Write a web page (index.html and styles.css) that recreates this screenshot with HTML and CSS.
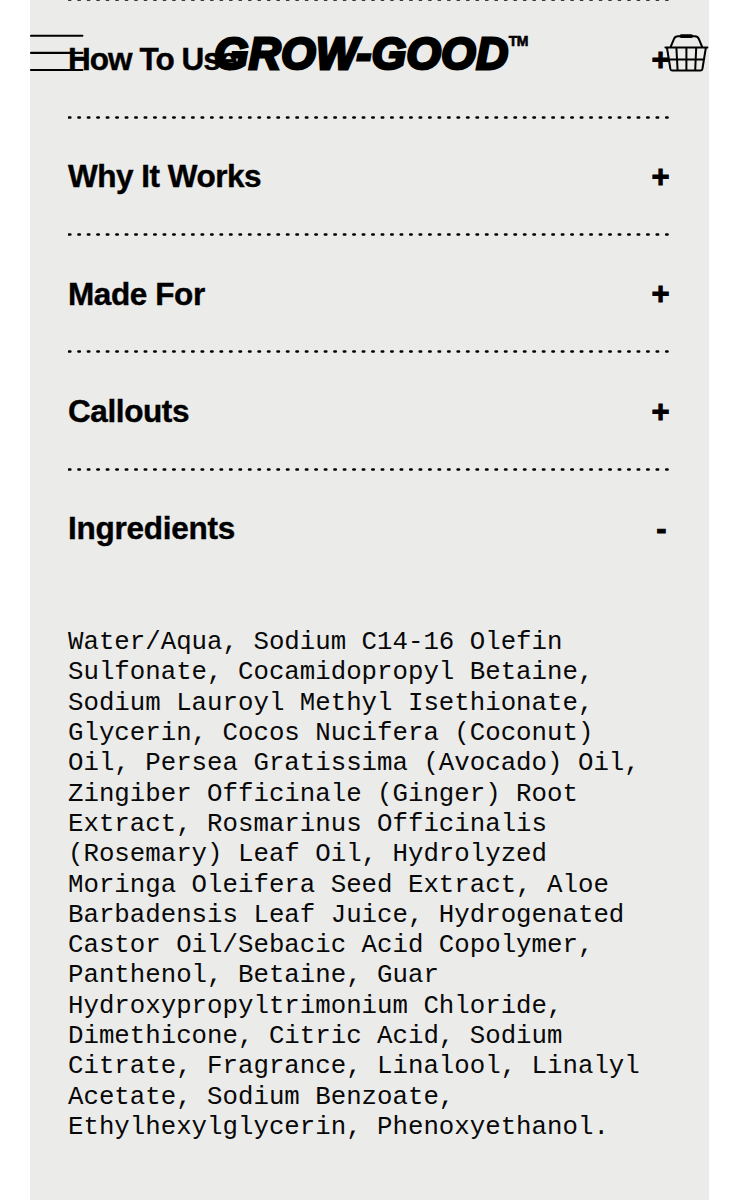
FILE: index.html
```html
<!DOCTYPE html>
<html lang="en">
<head>
<meta charset="utf-8">
<title>Grow-Good</title>
<link rel="stylesheet" href="styles.css">
</head>
<body>
<header class="header">
  <svg class="menu" viewBox="0 0 54 40" aria-label="Menu"><path d="M1 3.8H52.4M1 20.9H52.4M1 38H52.4"/></svg>
  <div class="logo"><span class="logo-name">GROW-GOOD</span><span class="logo-tm">TM</span></div>
  <svg class="basket" viewBox="0 0 46 42" aria-label="Basket">
    <path d="M2.4 15.4H44.4M4 16L7.4 37Q7.8 38.6 9.4 38.6H37.4Q39 38.6 39.4 37L42.8 16M5.8 27.4H41.2M13.4 16L14.6 38M23.4 16V38M33.2 16L32.2 38M7.6 15L11 6.8Q12.1 4.2 15 4.2H31.8Q34.7 4.2 35.8 6.8L39.2 15"/>
    <path class="grip" d="M18.4 4.1H28.2"/>
  </svg>
</header>
<main class="panel">
  <svg class="dots"><line class="dot-line" x1="0.8" y1="1.5" x2="599.5" y2="1.5"/></svg>
  <section class="row"><h2 class="title use">How To Use</h2><span class="sign">+</span></section>
  <svg class="dots"><line class="dot-line" x1="0.8" y1="1.5" x2="599.5" y2="1.5"/></svg>
  <section class="row"><h2 class="title why">Why It Works</h2><span class="sign">+</span></section>
  <svg class="dots"><line class="dot-line" x1="0.8" y1="1.5" x2="599.5" y2="1.5"/></svg>
  <section class="row"><h2 class="title made">Made For</h2><span class="sign">+</span></section>
  <svg class="dots"><line class="dot-line" x1="0.8" y1="1.5" x2="599.5" y2="1.5"/></svg>
  <section class="row"><h2 class="title callouts">Callouts</h2><span class="sign">+</span></section>
  <svg class="dots"><line class="dot-line" x1="0.8" y1="1.5" x2="599.5" y2="1.5"/></svg>
  <section class="row"><h2 class="title ingredients">Ingredients</h2><span class="sign minus">-</span></section>
  <p class="copy">Water/Aqua, Sodium C14-16 Olefin<br>Sulfonate, Cocamidopropyl Betaine,<br>Sodium Lauroyl Methyl Isethionate,<br>Glycerin, Cocos Nucifera (Coconut)<br>Oil, Persea Gratissima (Avocado) Oil,<br>Zingiber Officinale (Ginger) Root<br>Extract, Rosmarinus Officinalis<br>(Rosemary) Leaf Oil, Hydrolyzed<br>Moringa Oleifera Seed Extract, Aloe<br>Barbadensis Leaf Juice, Hydrogenated<br>Castor Oil/Sebacic Acid Copolymer,<br>Panthenol, Betaine, Guar<br>Hydroxypropyltrimonium Chloride,<br>Dimethicone, Citric Acid, Sodium<br>Citrate, Fragrance, Linalool, Linalyl<br>Acetate, Sodium Benzoate,<br>Ethylhexylglycerin, Phenoxyethanol.</p>
</main>
</body>
</html>
```
FILE: styles.css
```css
* { box-sizing: border-box; }
body { margin: 0; background: #fff; color: #000; height: 1200px; overflow: hidden; font-family: "Liberation Sans", Arial, sans-serif; }
.panel { width: 678.5px; height: 1200px; margin-left: 30px; padding: 0 39px 0 38px; background: #ebebea; overflow: hidden; }
.dots { display: block; width: 601px; height: 3px; }
.panel > .dots:first-child { margin-top: -1.6px; }
.dot-line { stroke: #000; stroke-width: 2.7; stroke-linecap: round; stroke-dasharray: 1.3 8.18; stroke-dashoffset: -.2; }
.row { height: 114.35px; padding-top: 1px; display: flex; align-items: center; justify-content: space-between; }
.title { margin: 0; font-size: 31.5px; line-height: 36px; font-weight: 700; white-space: nowrap; -webkit-text-stroke: .4px #000; }
.use { letter-spacing: -.95px; }
.why { letter-spacing: -.5px; }
.made { letter-spacing: -.4px; }
.callouts { letter-spacing: -.4px; }
.ingredients { letter-spacing: -.25px; }
.sign { padding-top: 1px; font-size: 31px; line-height: 36px; font-weight: 700; -webkit-text-stroke: .9px #000; }
.minus { margin-right: 3px; }
.copy { margin: 43px 0 0; font: 25.75px/30.29px "Liberation Mono", "Courier New", monospace; white-space: nowrap; color: #080808; }
.header { position: absolute; top: 32px; left: 30px; width: 679px; height: 44px; display: flex; justify-content: space-between; align-items: flex-start; z-index: 2; }
.menu { width: 54px; height: 40px; fill: none; stroke: #000; stroke-width: 2.1; stroke-linecap: round; }
.logo { display: flex; align-items: flex-start; width: 314px; margin-left: -5px; white-space: nowrap; }
.logo-name { width: 296px; font: italic 700 44.2px/44px "Liberation Sans", Arial, sans-serif; letter-spacing: .45px; -webkit-text-stroke: 3px #000; }
.logo-tm { padding-top: 1px; font-size: 14px; line-height: 16px; font-weight: 700; letter-spacing: -.5px; -webkit-text-stroke: .6px #000; }
.basket { width: 46px; height: 42px; fill: none; stroke: #000; stroke-width: 2; stroke-linejoin: round; stroke-linecap: round; }
.grip { stroke-width: 3.8; }
```
